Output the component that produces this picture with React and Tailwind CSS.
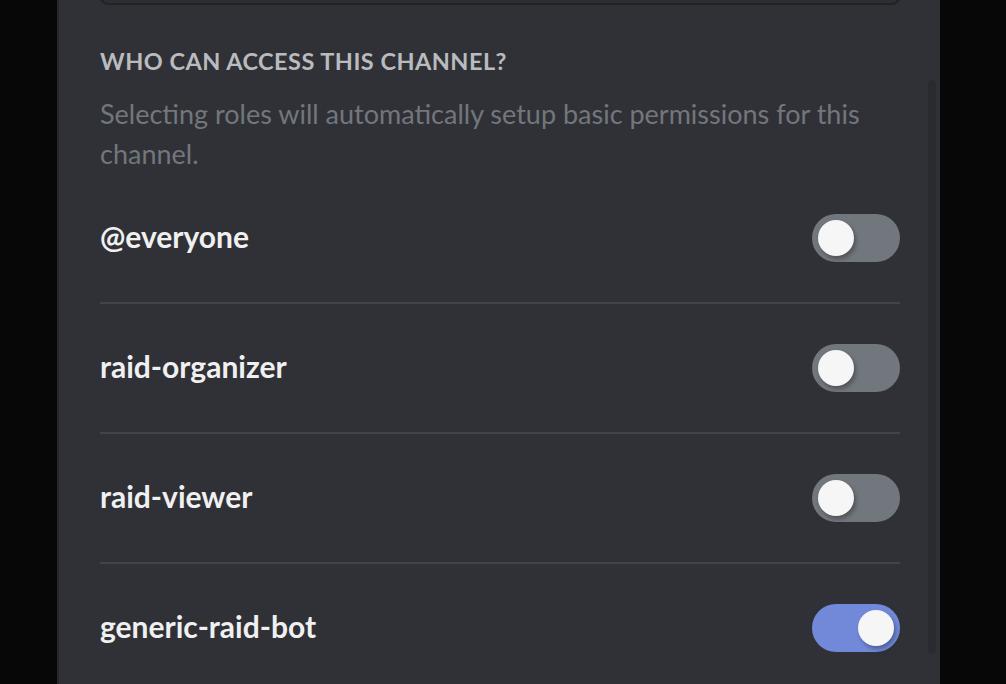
import { useState } from 'react'

const roles = [
  { name: '@everyone', enabled: false },
  { name: 'raid-organizer', enabled: false },
  { name: 'raid-viewer', enabled: false },
  { name: 'generic-raid-bot', enabled: true },
]

function Toggle({ checked, onChange }) {
  return (
    <button
      type="button"
      onClick={onChange}
      className={`relative h-[48px] w-[88px] shrink-0 rounded-full transition ${
        checked ? 'bg-[#7289da]' : 'bg-[#72767d]'
      }`}
    >
      <span
        className={`absolute top-[6px] h-[36px] w-[36px] rounded-full bg-[#f6f6f7] shadow-[2px_3px_4px_rgba(0,0,0,0.3)] transition-all ${
          checked ? 'left-[46px]' : 'left-[6px]'
        }`}
      />
    </button>
  )
}

export default function App() {
  const [state, setState] = useState(roles)

  const flip = (name) =>
    setState((prev) => prev.map((r) => (r.name === name ? { ...r, enabled: !r.enabled } : r)))

  return (
    <div className="flex h-[684px] w-full overflow-hidden bg-[#070707] font-['Lato',sans-serif]">
      <div className="ml-[57px] flex w-[883px] border-l-2 border-[#26272b] bg-[#303136]">
        <div className="flex w-[869px] flex-col pl-[41px] pr-[28px]">
          <div className="-mt-[40px] h-[45px] shrink-0 rounded-lg border-2 border-[#222327] bg-[#2d2e32]" />

          <h5 className="mt-[40px] shrink-0 text-[23.5px] font-bold uppercase leading-[32px] tracking-[0.02em] text-[#b9bbbe]">
            Who can access this channel?
          </h5>
          <p className="mt-[17px] shrink-0 text-[27px] leading-[40px] text-[#72767d]">
            Selecting roles will automatically setup basic permissions for this channel.
          </p>

          <div className="flex shrink-0 flex-col">
            {state.map((role, i) => (
              <div
                key={role.name}
                className={`flex shrink-0 items-center justify-between py-[40px] ${
                  i < state.length - 1 ? 'border-b-2 border-[#424448]' : ''
                }`}
              >
                <span className="mb-[4px] text-[30px] font-bold leading-[40px] text-[#f0f0f1]">{role.name}</span>
                <Toggle checked={role.enabled} onChange={() => flip(role.name)} />
              </div>
            ))}
          </div>
        </div>
        <div className="mt-[80px] h-[574px] w-[8px] shrink-0 rounded-full bg-[#2a2b2f]" />
      </div>
    </div>
  )
}
